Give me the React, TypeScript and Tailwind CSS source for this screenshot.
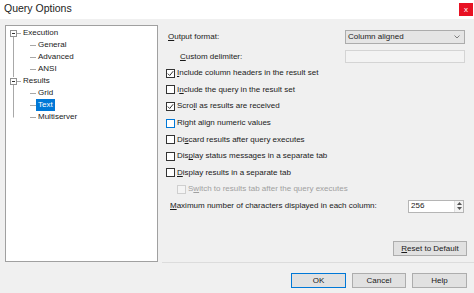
import React from "react";

const font = { fontFamily: '"Liberation Sans", Arial, sans-serif' };

function U({ t, i }: { t: string; i: number }) {
  return (
    <span>
      {t.slice(0, i)}
      <span className="underline underline-offset-[1px]">{t[i]}</span>
      {t.slice(i + 1)}
    </span>
  );
}

function Check({ checked, focus, disabled }: { checked?: boolean; focus?: boolean; disabled?: boolean }) {
  const border = disabled ? "border-[#cfcfcf]" : focus ? "border-[#0078d7]" : "border-[#333333]";
  return (
    <span className={`w-[9px] h-[9px] border ${border} ${disabled ? "bg-[#f4f4f4]" : "bg-white"} flex items-center justify-center shrink-0`}>
      {checked && (
        <svg width="7" height="7" viewBox="0 0 7 7">
          <path d="M0.8 3.6 L2.7 5.5 L6.2 1.2" fill="none" stroke="#333" strokeWidth="1" />
        </svg>
      )}
    </span>
  );
}

function CheckRow({ label, u, checked, focus, disabled, indent }: { label: string; u: number; checked?: boolean; focus?: boolean; disabled?: boolean; indent?: boolean }) {
  return (
    <div className={`h-[16.6px] flex items-center gap-[2px] ${indent ? "pl-[19px]" : "pl-[8px]"}`}>
      <Check checked={checked} focus={focus} disabled={disabled} />
      <span className={disabled ? "text-[#a0a0a0]" : "text-[#1a1a1a]"}>
        {u >= 0 ? <U t={label} i={u} /> : label}
      </span>
    </div>
  );
}

function TreeRow({ label, child, selected }: { label: string; child?: boolean; selected?: boolean }) {
  return (
    <div className={`h-[12px] flex items-center ${child ? "pl-[30px]" : "pl-[15px]"}`}>
      <span className={`px-[2px] h-[12px] flex items-center ${selected ? "bg-[#0078d7] text-white" : "text-[#1a1a1a]"}`}>{label}</span>
    </div>
  );
}

function Btn({ label, u, w, primary }: { label: string; u?: number; w: string; primary?: boolean }) {
  return (
    <div className={`${w} h-[15px] flex items-center justify-center bg-[#e1e1e1] border ${primary ? "border-[#0078d7]" : "border-[#adadad]"} text-[#1a1a1a]`}>
      {u !== undefined ? <U t={label} i={u} /> : label}
    </div>
  );
}

export default function App() {
  return (
    <div className="w-[474px] h-[293px] bg-[#f0f0f0] flex flex-col overflow-hidden text-[8px] leading-none" style={font}>
      {/* title bar */}
      <div className="h-[19px] bg-white flex items-start justify-between shrink-0">
        <span className="pl-[4px] pt-[3px] text-[10.5px] text-[#222]">Query Options</span>
        <div className="mt-[3px] mr-[1px] w-[14px] h-[13px] bg-[#e81123] flex items-center justify-center text-white text-[8px]">x</div>
      </div>

      {/* main */}
      <div className="flex pt-[6px] shrink-0">
        <div className="ml-[5px] w-[153px] h-[237px] bg-white border border-[#a0a0a0] relative pt-[1px]">
          <svg className="absolute left-0 top-0" width="60" height="110" viewBox="0 0 60 110">
            <g stroke="#a8a8a8" strokeWidth="1" fill="none">
              <line x1="7.5" y1="11" x2="7.5" y2="51" />
              <line x1="7.5" y1="59" x2="7.5" y2="91.5" />
              <line x1="11" y1="7.5" x2="15" y2="7.5" />
              <line x1="11" y1="55.5" x2="15" y2="55.5" />
              <line x1="24" y1="19.5" x2="30" y2="19.5" />
              <line x1="24" y1="31.5" x2="30" y2="31.5" />
              <line x1="24" y1="43.5" x2="30" y2="43.5" />
              <line x1="24" y1="67.5" x2="30" y2="67.5" />
              <line x1="24" y1="79.5" x2="30" y2="79.5" />
              <line x1="24" y1="91.5" x2="30" y2="91.5" />
            </g>
            <g>
              <rect x="4.5" y="4.5" width="6" height="6" fill="white" stroke="#919191" />
              <line x1="6" y1="7.5" x2="9" y2="7.5" stroke="#333" />
              <rect x="4.5" y="52.5" width="6" height="6" fill="white" stroke="#919191" />
              <line x1="6" y1="55.5" x2="9" y2="55.5" stroke="#333" />
            </g>
          </svg>
          <div className="relative">
            <TreeRow label="Execution" />
            <TreeRow label="General" child />
            <TreeRow label="Advanced" child />
            <TreeRow label="ANSI" child />
            <TreeRow label="Results" />
            <TreeRow label="Grid" child />
            <TreeRow label="Text" child selected />
            <TreeRow label="Multiserver" child />
          </div>
        </div>

        <div className="flex-1 h-[237px] flex flex-col">
          <div className="mt-[5px] h-[14px] flex items-center">
            <span className="pl-[10px] text-[#1a1a1a]"><U t="Output format:" i={0} /></span>
            <div className="ml-auto mr-[9px] w-[120px] h-[14px] bg-[#e5e5e5] border border-[#acacac] flex items-center pl-[2px] pr-[4px] text-[#1a1a1a]">
              <span>Column aligned</span>
              <svg className="ml-auto" width="6" height="4" viewBox="0 0 6 4">
                <path d="M0.5 0.5 L3 3 L5.5 0.5" fill="none" stroke="#707070" strokeWidth="0.9" />
              </svg>
            </div>
          </div>
          <div className="mt-[6px] h-[13px] flex items-center">
            <span className="pl-[22px] text-[#1a1a1a]"><U t="Custom delimiter:" i={0} /></span>
            <div className="ml-auto mr-[9px] w-[120px] h-[13px] bg-[#f3f3f3] border border-[#d4d4d4]" />
          </div>
          <div className="mt-[2px] flex flex-col">
            <CheckRow label="Include column headers in the result set" u={0} checked />
            <CheckRow label="Include the query in the result set" u={1} />
            <CheckRow label="Scroll as results are received" u={4} checked />
            <CheckRow label="Right align numeric values" u={-1} focus />
            <CheckRow label="Discard results after query executes" u={2} />
            <CheckRow label="Display status messages in a separate tab" u={3} />
            <CheckRow label="Display results in a separate tab" u={0} />
            <CheckRow label="Switch to results tab after the query executes" u={1} disabled indent />
            <div className="h-[16.6px] flex items-center">
              <span className="pl-[12px] text-[#1a1a1a]"><U t="Maximum number of characters displayed in each column:" i={0} /></span>
              <div className="ml-auto mr-[10px] w-[56px] h-[13px] bg-white border border-[#b5b5b5] flex items-center pl-[2px] text-[#1a1a1a]">
                <span>256</span>
                <div className="ml-auto w-[9px] h-full flex flex-col items-center justify-center gap-[2px] bg-[#f3f3f3] border-l border-[#e0e0e0]">
                  <svg width="5" height="3" viewBox="0 0 5 3"><path d="M0 3 L2.5 0 L5 3Z" fill="#555" /></svg>
                  <svg width="5" height="3" viewBox="0 0 5 3"><path d="M0 0 L2.5 3 L5 0Z" fill="#555" /></svg>
                </div>
              </div>
            </div>
          </div>
          <div className="mt-auto mb-[6px] flex justify-end pr-[7px]">
            <Btn label="Reset to Default" u={0} w="w-[74px]" />
          </div>
        </div>
      </div>

      {/* footer */}
      <div className="ml-[162px] h-px bg-[#dcdcdc] shrink-0" />
      <div className="mt-[10px] flex justify-end gap-[6px] pr-[7px]">
        <Btn label="OK" w="w-[55px]" primary />
        <Btn label="Cancel" w="w-[54px]" />
        <Btn label="Help" w="w-[55px]" />
      </div>
    </div>
  );
}
